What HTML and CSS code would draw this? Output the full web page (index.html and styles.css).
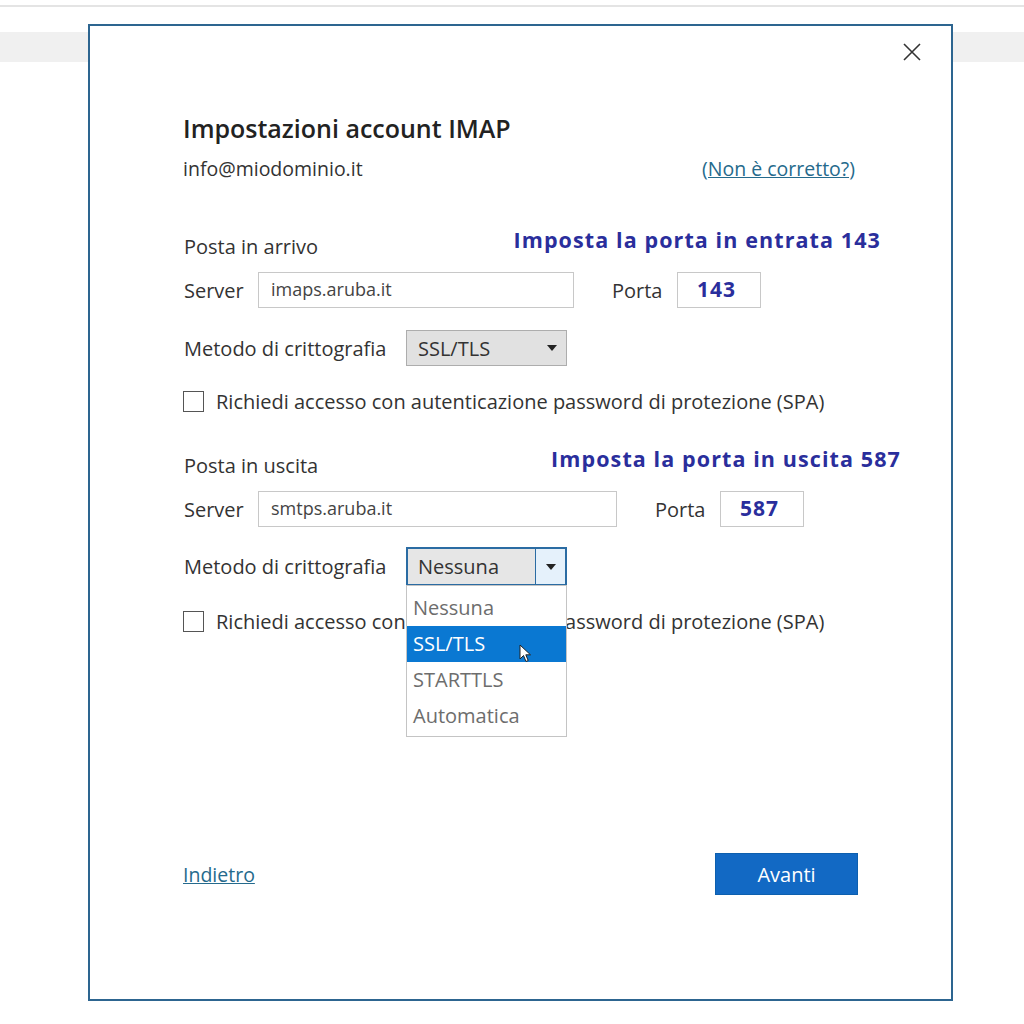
FILE: index.html
```html
<!DOCTYPE html>
<html lang="it">
<head>
    <meta charset="UTF-8">
    <meta name="viewport" content="width=device-width, initial-scale=1.0">
    <title>Impostazioni account IMAP</title>
    <link rel="stylesheet" href="styles.css">
</head>
<body>

    <!-- Sfondo della finestra principale -->
    <div class="backdrop">
        <div class="top-line"></div>
        <div class="toolbar-band"></div>
    </div>

    <!-- Finestra di dialogo -->
    <div class="dialog">
        <button class="close-btn" aria-label="Chiudi">
            <svg width="18" height="18" viewBox="0 0 18 18">
                <path d="M1 1 L17 17 M17 1 L1 17" stroke="#333" stroke-width="1.6" fill="none"/>
            </svg>
        </button>

        <div class="content">
            <h1 class="title">Impostazioni account IMAP</h1>
            <div class="account-row">
                <span>info@miodominio.it</span>
                <a href="#" class="link">(Non è corretto?)</a>
            </div>

            <!-- Posta in arrivo -->
            <div class="section-row section-in">
                <span class="section-label">Posta in arrivo</span>
                <span class="note note-in">Imposta la porta in entrata 143</span>
            </div>
            <div class="field-row server-row">
                <span class="field-label">Server</span>
                <div class="input input-in">imaps.aruba.it</div>
                <span class="port-label">Porta</span>
                <div class="input port-input">143</div>
            </div>
            <div class="field-row method-row">
                <span class="method-label">Metodo di crittografia</span>
                <div class="select">
                    <span class="select-value">SSL/TLS</span>
                    <span class="select-arrow"></span>
                </div>
            </div>
            <div class="check-row">
                <span class="checkbox"></span>
                <span>Richiedi accesso con autenticazione password di protezione (SPA)</span>
            </div>

            <!-- Posta in uscita -->
            <div class="section-row section-out">
                <span class="section-label">Posta in uscita</span>
                <span class="note note-out">Imposta la porta in uscita 587</span>
            </div>
            <div class="field-row server-row">
                <span class="field-label">Server</span>
                <div class="input input-out">smtps.aruba.it</div>
                <span class="port-label">Porta</span>
                <div class="input port-input port-out">587</div>
            </div>
            <div class="field-row method-row method-open">
                <span class="method-label">Metodo di crittografia</span>
                <div class="select select-open">
                    <span class="select-value">Nessuna</span>
                    <span class="select-arrow"></span>
                    <ul class="dropdown">
                        <li>Nessuna</li>
                        <li class="active">SSL/TLS
                            <svg class="cursor" width="14" height="20" viewBox="0 0 14 20">
                                <path d="M1 1 L1 15 L4.5 11.5 L7 17.5 L9.2 16.5 L6.8 10.8 L11.5 10.8 Z" fill="#fff" stroke="#222" stroke-width="1"/>
                            </svg>
                        </li>
                        <li>STARTTLS</li>
                        <li>Automatica</li>
                    </ul>
                </div>
            </div>
            <div class="check-row">
                <span class="checkbox"></span>
                <span>Richiedi accesso con autenticazione password di protezione (SPA)</span>
            </div>
        </div>

        <div class="footer">
            <a href="#" class="link">Indietro</a>
            <button class="primary-btn">Avanti</button>
        </div>
    </div>

</body>
</html>
```

FILE: styles.css
```css
/* Stili generali */
body {
    font-family: "Open Sans", "Noto Sans", sans-serif;
    margin: 0;
    padding: 0;
    background-color: #fff;
    color: #333;
}

/* Sfondo dietro la finestra */
.backdrop {
    height: 1024px;
    padding-top: 5px;
    box-sizing: border-box;
}

.top-line {
    height: 2px;
    background-color: #e4e4e4;
}

.toolbar-band {
    height: 30px;
    margin-top: 25px;
    background-color: #f0f0f0;
}

/* Finestra di dialogo */
.dialog {
    position: absolute;
    left: 88px;
    top: 24px;
    width: 865px;
    height: 977px;
    box-sizing: border-box;
    border: 2px solid #2d6590;
    background-color: #fff;
    display: flex;
    flex-direction: column;
}

.close-btn {
    position: absolute;
    top: 17px;
    right: 30px;
    padding: 0;
    border: none;
    background: none;
    width: 18px;
    height: 18px;
    cursor: pointer;
}

.content {
    padding: 86px 95px 0 93px;
    font-size: 20px;
    white-space: nowrap;
}

.title {
    margin: 0;
    font-size: 25px;
    font-weight: 600;
    line-height: 32px;
    color: #222;
}

.account-row {
    display: flex;
    justify-content: space-between;
    align-items: center;
    height: 24px;
    margin-top: 12px;
    padding-right: 1px;
    font-size: 19.5px;
}

.link {
    color: #256a8c;
    text-decoration: underline;
}

/* Intestazioni delle sezioni */
.section-row {
    display: flex;
    align-items: flex-end;
    height: 30px;
}

.section-in {
    margin-top: 50px;
}

.section-out {
    margin-top: 37px;
}

.section-label {
    padding-left: 1px;
    line-height: 27px;
    flex-shrink: 0;
}

.note {
    margin-left: auto;
    flex-shrink: 0;
    font-weight: 700;
    font-size: 21.5px;
    line-height: 29px;
    color: #2a2e9c;
    padding-bottom: 6px;
    letter-spacing: 1.1px;
}

.note-in {
    margin-right: -25px;
}

.note-out {
    margin-right: -45px;
}

/* Righe dei campi */
.field-row {
    display: flex;
    align-items: center;
}

.server-row {
    margin-top: 12px;
    height: 36px;
}

.field-label {
    width: 75px;
    padding-left: 1px;
    box-sizing: border-box;
}

.input {
    height: 100%;
    box-sizing: border-box;
    border: 1px solid #c8c8c8;
    padding-left: 12px;
    font-size: 18px;
    line-height: 33px;
    color: #444;
}

.input-in {
    width: 316px;
}

.input-out {
    width: 359px;
}

.port-label {
    width: 65px;
    margin-left: 38px;
}

.port-input {
    width: 84px;
    padding-left: 19px;
    font-weight: 700;
    font-size: 21px;
    letter-spacing: 1px;
    color: #2a2e9c;
}

.method-row {
    margin-top: 22px;
    height: 36px;
}

.method-open {
    margin-top: 20px;
    height: 39px;
}

.method-label {
    width: 223px;
    padding-left: 1px;
    box-sizing: border-box;
}

/* Menu a tendina */
.select {
    position: relative;
    width: 161px;
    height: 100%;
    box-sizing: border-box;
    border: 1px solid #adadad;
    background-color: #e1e1e1;
    display: flex;
    align-items: center;
    justify-content: space-between;
}

.select-value {
    padding-left: 11px;
}

.select-arrow {
    width: 29px;
    height: 100%;
    display: flex;
    align-items: center;
    justify-content: center;
}

.select-arrow::after {
    content: "";
    border-left: 5px solid transparent;
    border-right: 5px solid transparent;
    border-top: 6px solid #222;
}

.select-open {
    border: 2px solid #2b6ca3;
    background-color: #e6e6e6;
}

.select-open .select-value {
    padding-left: 10px;
}

.select-open .select-arrow {
    border-left: 1px solid #2b6ca3;
    background-color: #e5f1fb;
}

.dropdown {
    position: absolute;
    top: calc(100% + 1px);
    left: -2px;
    width: 161px;
    box-sizing: border-box;
    margin: 0;
    padding: 4px 0 2px;
    list-style: none;
    background-color: #fff;
    border: 1px solid #c4c4c4;
    color: #6d6d6d;
    z-index: 2;
}

.dropdown li {
    height: 36px;
    line-height: 36px;
    padding-left: 6px;
    position: relative;
}

.dropdown li.active {
    background-color: #0a78d2;
    color: #fff;
}

.cursor {
    position: absolute;
    left: 112px;
    top: 18px;
}

/* Casella di controllo */
.check-row {
    display: flex;
    align-items: center;
    height: 21px;
    margin-top: 25px;
}

.checkbox {
    width: 21px;
    height: 21px;
    box-sizing: border-box;
    border: 1px solid #555;
    margin-right: 12px;
    background-color: #fff;
}

/* Pulsanti in basso */
.footer {
    margin-top: auto;
    margin-bottom: 104px;
    padding: 0 93px;
    display: flex;
    justify-content: space-between;
    align-items: center;
    font-size: 19.5px;
}

.primary-btn {
    width: 143px;
    height: 42px;
    border: 1px solid #0d5fae;
    background-color: #1269c4;
    color: #fff;
    font-family: inherit;
    font-size: 20px;
    cursor: pointer;
}
```
